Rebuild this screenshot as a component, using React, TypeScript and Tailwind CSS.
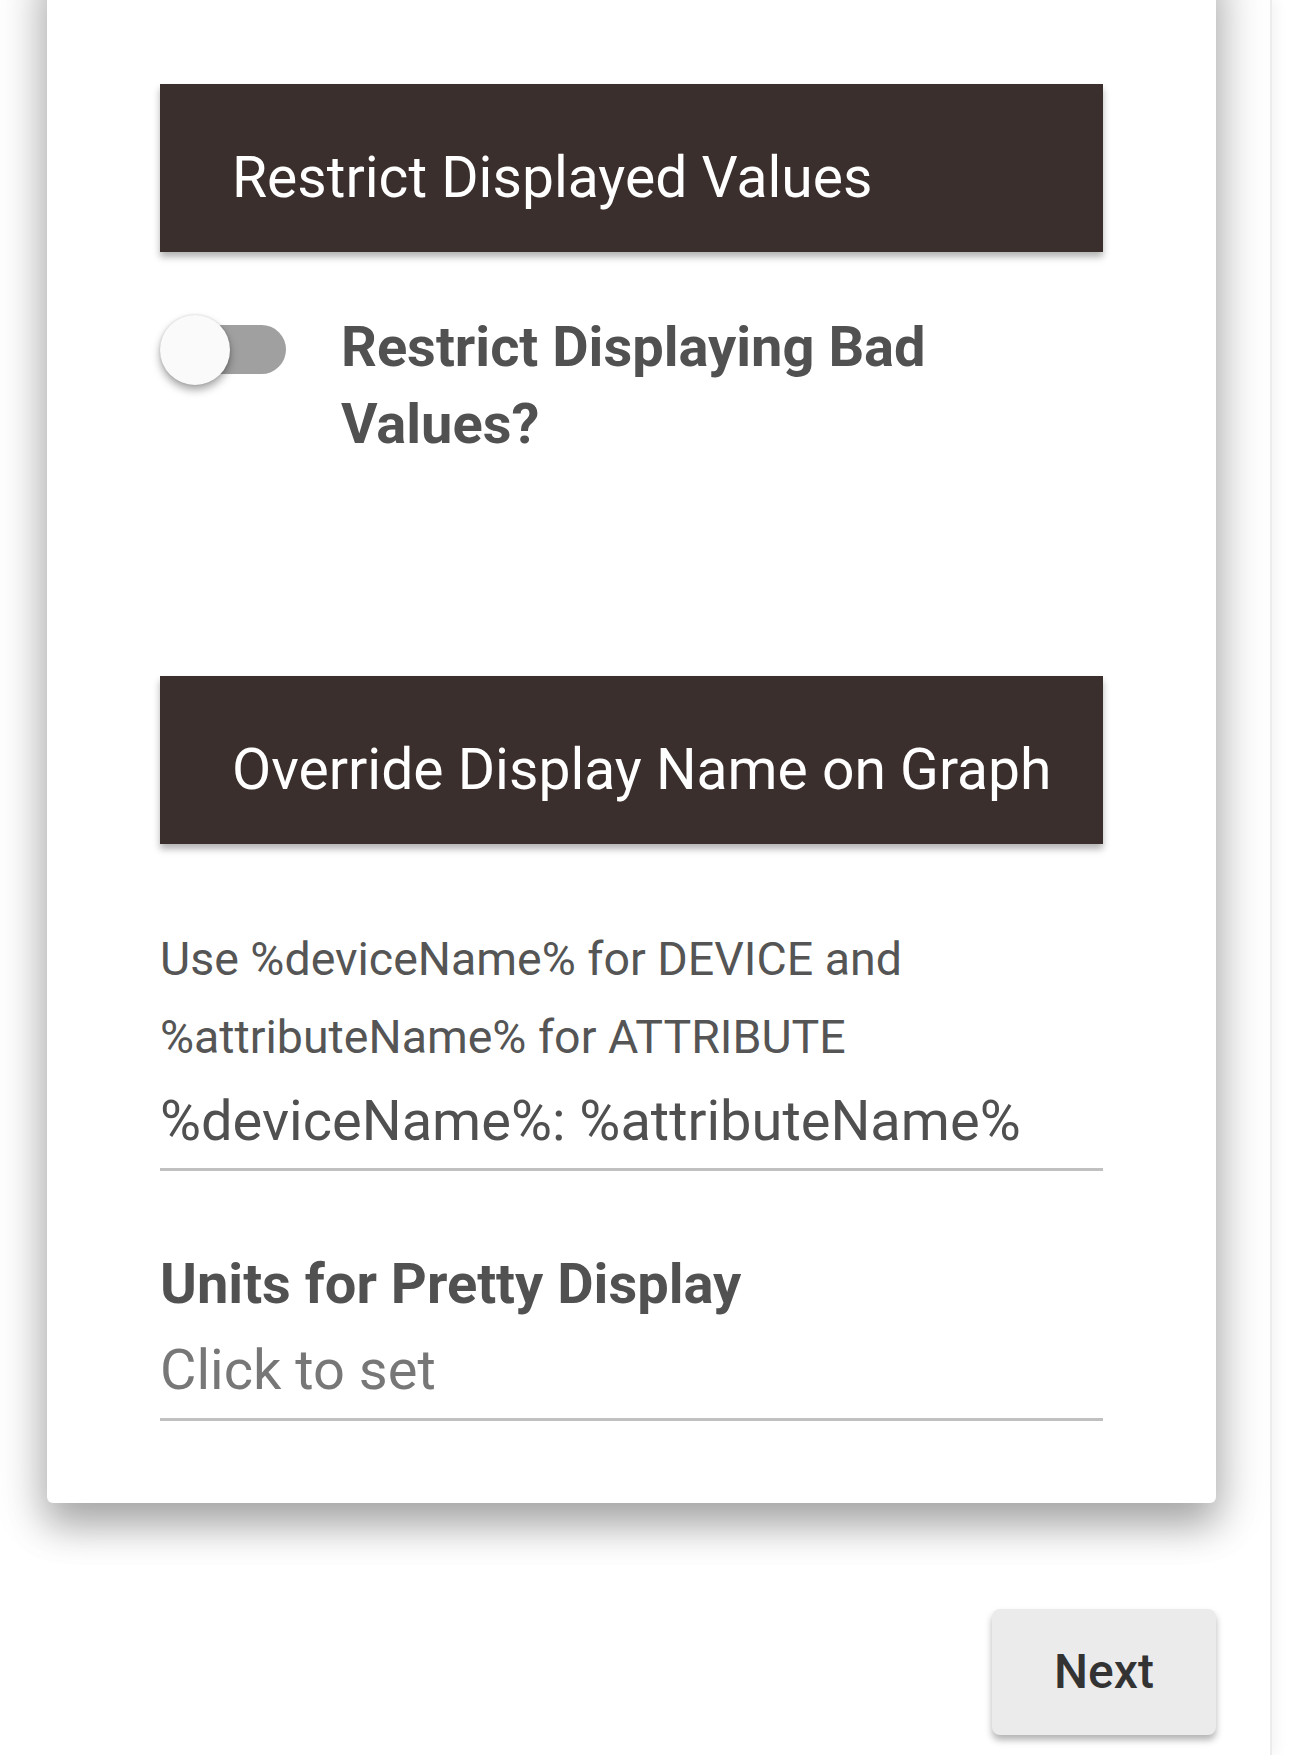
import React from "react";

const font = "font-['Roboto','Liberation_Sans',sans-serif]";

function SectionHeader({ title }: { title: string }) {
  return (
    <div className="h-[168px] bg-[#3a2f2d] pl-[72px] pt-[60px] shadow-[0_5px_7px_rgba(0,0,0,0.3)]">
      <span className="text-[57px] leading-[68px] text-white">{title}</span>
    </div>
  );
}

function Toggle() {
  return (
    <div className="relative mt-[6px] h-[70px] w-[126px] shrink-0">
      <div className="absolute left-[7px] top-[10px] h-[49px] w-[119px] rounded-full bg-[#a0a0a0]" />
      <div className="absolute left-0 top-0 h-[70px] w-[70px] rounded-full bg-[#fafafa] shadow-[0_5px_8px_rgba(0,0,0,0.35),0_0_3px_rgba(0,0,0,0.15)]" />
    </div>
  );
}

export default function App() {
  return (
    <div className={`${font} h-[1755px] w-[1303px] overflow-hidden bg-white`}>
      <div className="flex h-full w-[1272px] flex-col items-end border-r-2 border-[#ececec] pl-[47px] pr-[54px] shadow-[6px_0_10px_rgba(0,0,0,0.04)]">
        {/* Card */}
        <div className="-mt-[40px] w-[1169px] rounded-[6px] bg-white px-[113px] pb-[82px] pt-[124px] shadow-[0_22px_38px_rgba(0,0,0,0.28),0_8px_50px_10px_rgba(0,0,0,0.12)]">
          <SectionHeader title="Restrict Displayed Values" />

          <div className="mt-[57px] flex items-start gap-[55px]">
            <Toggle />
            <div className="text-[56px] font-bold leading-[77px] text-[#515151]">
              Restrict Displaying Bad Values?
            </div>
          </div>

          <div className="mt-[213px]">
            <SectionHeader title="Override Display Name on Graph" />
          </div>

          <div className="mt-[76px] text-[46.5px] leading-[78px] text-[#555555]">
            <div>Use %deviceName% for DEVICE and</div>
            <div>%attributeName% for ATTRIBUTE</div>
          </div>
          <div className="mt-[16px] border-b-[3px] border-[#c0c0c0] pb-[17px] text-[56px] leading-[59px] text-[#505050]">
            %deviceName%: %attributeName%
          </div>

          <div className="mt-[81px] text-[56px] font-bold leading-[64px] text-[#515151]">
            Units for Pretty Display
          </div>
          <div className="mt-[22px] border-b-[3px] border-[#c0c0c0] pb-[16px] text-[56px] leading-[64px] text-[#777777]">
            Click to set
          </div>
        </div>

        {/* Actions */}
        <div className="mt-[106px] flex">
          <button className="flex h-[126px] w-[224px] items-center justify-center rounded-[8px] bg-[#ebebeb] text-[48px] font-medium text-[#333333] shadow-[0_5px_7px_rgba(0,0,0,0.3)]">
            Next
          </button>
        </div>
      </div>
    </div>
  );
}
